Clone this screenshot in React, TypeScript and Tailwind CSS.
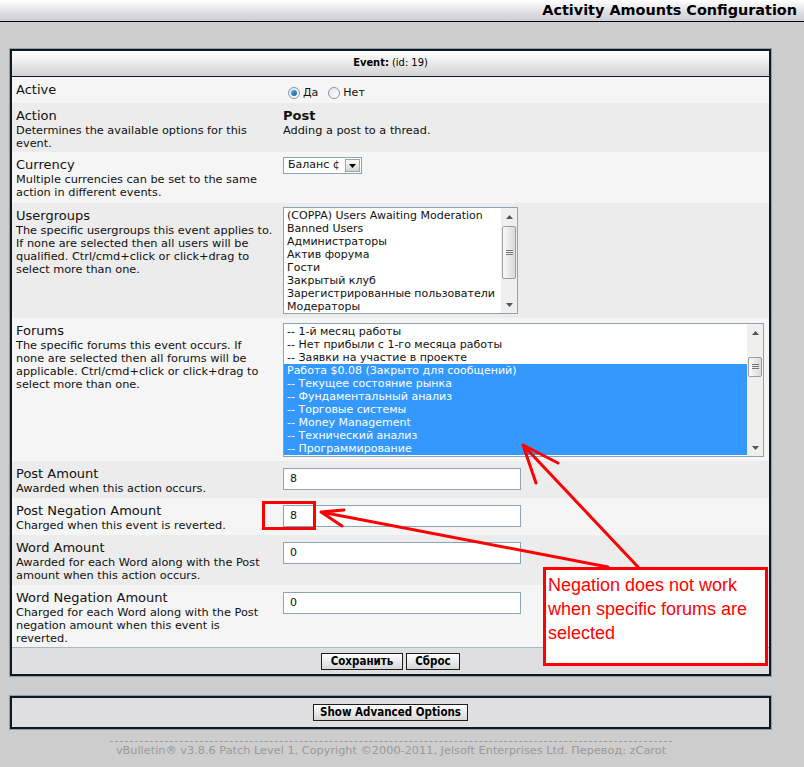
import React from "react";

type RowProps = {
  bg: string;
  h: string;
  label: string;
  lines?: string[];
  right: string;
  children?: React.ReactNode;
};

const Row = ({ bg, h, label, lines, right, children }: RowProps) => (
  <div className={`flex ${bg} ${h}`}>
    <div className="w-[267px] shrink-0 pl-[4px] pt-[5px] text-[#111]">
      <div className="text-[13px] leading-[16px] whitespace-nowrap">{label}</div>
      {lines?.map((line) => (
        <div key={line} className="whitespace-nowrap text-[11.3px] leading-[13px]">
          {line}
        </div>
      ))}
    </div>
    <div className={`flex-1 pl-[4px] ${right}`}>{children}</div>
  </div>
);

const Scrollbar = ({ thumb }: { thumb: string }) => (
  <div className="flex w-[16px] shrink-0 flex-col bg-[#efefed]">
    <div className="flex h-[17px] items-center justify-center">
      <svg width="7" height="4" viewBox="0 0 7 4">
        <path d="M3.5 0L7 4H0Z" fill="#555" />
      </svg>
    </div>
    <div className="flex-1">
      <div
        className={`${thumb} mx-[1px] flex items-center justify-center rounded-[2px] border border-[#9c9c9c] bg-gradient-to-r from-[#fbfbfb] to-[#d9d9d9]`}
      >
        <svg width="7" height="6" viewBox="0 0 7 6">
          <path d="M0 0.5H7M0 2.5H7M0 4.5H7" stroke="#777" strokeWidth="1" />
        </svg>
      </div>
    </div>
    <div className="flex h-[17px] items-center justify-center">
      <svg width="7" height="4" viewBox="0 0 7 4">
        <path d="M0 0H7L3.5 4Z" fill="#555" />
      </svg>
    </div>
  </div>
);

type ListProps = {
  size: string;
  items: string[];
  selectedFrom?: number;
  offset: string;
  thumb: string;
};

const ListBox = ({ size, items, selectedFrom = 999, offset, thumb }: ListProps) => (
  <div className={`flex overflow-hidden border border-[#8aa4b8] bg-white ${size}`}>
    <div className="flex-1 overflow-hidden">
      <div className={offset}>
        {items.map((item, i) => (
          <div
            key={item}
            className={`h-[13px] whitespace-nowrap pl-[3px] text-[11px] leading-[13px] ${
              i >= selectedFrom ? "bg-[#3399ff] text-white" : "text-[#111]"
            }`}
          >
            {item}
          </div>
        ))}
      </div>
    </div>
    <Scrollbar thumb={thumb} />
  </div>
);

const TextInput = ({ value }: { value: string }) => (
  <input
    readOnly
    value={value}
    className="h-[22px] w-[238px] border border-[#8aa4b8] bg-white pl-[6px] text-[11px] text-[#111] outline-none"
  />
);

const Radio = ({ checked }: { checked?: boolean }) => (
  <span className="flex h-[12px] w-[12px] items-center justify-center rounded-full border border-[#8696a4] bg-gradient-to-br from-[#e6e6e6] to-white">
    {checked && <span className="h-[6px] w-[6px] rounded-full bg-gradient-to-br from-[#5ab0ee] to-[#1258a8]" />}
  </span>
);

const Button = ({ label, w }: { label: string; w: string }) => (
  <button
    className={`flex h-[17px] items-center justify-center border border-[#1e1e1e] bg-gradient-to-b from-white to-[#d6d6d6] font-['DejaVu_Sans_Condensed','DejaVu_Sans',sans-serif] text-[11.5px] font-bold text-black ${w}`}
  >
    {label}
  </button>
);

const usergroups = [
  "(COPPA) Users Awaiting Moderation",
  "Banned Users",
  "Администраторы",
  "Актив форума",
  "Гости",
  "Закрытый клуб",
  "Зарегистрированные пользователи",
  "Модераторы",
];

const forums = [
  "-- 1-й месяц работы",
  "-- Нет прибыли с 1-го месяца работы",
  "-- Заявки на участие в проекте",
  "Работа $0.08 (Закрыто для сообщений)",
  "-- Текущее состояние рынка",
  "-- Фундаментальный анализ",
  "-- Торговые системы",
  "-- Money Management",
  "-- Технический анализ",
  "-- Программирование",
];

export default function App() {
  return (
    <div className="relative min-h-[767px] w-[804px] bg-[#cdcdcd] font-['DejaVu_Sans',Verdana,sans-serif] text-[#111]">
      {/* page title */}
      <div className="flex h-[22px] items-center justify-end border-b border-black bg-[linear-gradient(to_bottom,#ffffff_0%,#f3f3f5_22%,#dedee2_60%,#cfcfd3_100%)] pr-[7px]">
        <span className="text-[14.4px] font-bold text-black">Activity Amounts Configuration</span>
      </div>

      {/* main form */}
      <div className="ml-[9px] mt-[26px] w-[763px] border border-[#8f9fa8]">
        <div className="border-2 border-[#0e1a22]">
          <div className="flex h-[26px] items-center justify-center border-b border-[#0e1a22] bg-[linear-gradient(to_bottom,#ffffff_0%,#f6f6f6_25%,#e2e2e2_65%,#d2d2d4_100%)] font-['DejaVu_Sans_Condensed','DejaVu_Sans',sans-serif] text-[11px] text-black">
            <b>Event:</b>&nbsp;(id: 19)
          </div>

          <Row bg="bg-[#f5f5f5]" h="h-[26px]" label="Active" right="pt-[9px]">
            <div className="flex h-[14px] items-center text-[11px]">
              <span className="ml-[5px]">
                <Radio checked />
              </span>
              <span className="ml-[3px]">Да</span>
              <span className="ml-[10px]">
                <Radio />
              </span>
              <span className="ml-[3px]">Нет</span>
            </div>
          </Row>

          <Row
            bg="bg-[#ececec]"
            h="h-[49px]"
            label="Action"
            lines={["Determines the available options for this", "event."]}
            right="pt-[5px]"
          >
            <div className="text-[13px] font-bold leading-[16px]">Post</div>
            <div className="text-[11.3px] leading-[13px]">Adding a post to a thread.</div>
          </Row>

          <Row
            bg="bg-[#f5f5f5]"
            h="h-[51px]"
            label="Currency"
            lines={["Multiple currencies can be set to the same", "action in different events."]}
            right="pt-[5px]"
          >
            <div className="flex h-[17px] w-[79px] items-center justify-between border border-[#8aa4b8] bg-white pl-[4px] pr-[1px] text-[11px]">
              <span>Баланс ¢</span>
              <span className="flex h-[13px] w-[15px] items-center justify-center border border-[#a3a3a3] bg-gradient-to-b from-white to-[#d4d4d4]">
                <svg width="7" height="4" viewBox="0 0 7 4">
                  <path d="M0 0H7L3.5 4Z" fill="#000" />
                </svg>
              </span>
            </div>
          </Row>

          <Row
            bg="bg-[#ececec]"
            h="h-[115px]"
            label="Usergroups"
            lines={[
              "The specific usergroups this event applies to.",
              "If none are selected then all users will be",
              "qualified. Ctrl/cmd+click or click+drag to",
              "select more than one.",
            ]}
            right="pt-[4px]"
          >
            <ListBox size="h-[107px] w-[235px]" items={usergroups} offset="pt-[1px]" thumb="mt-[1px] h-[53px]" />
          </Row>

          <Row
            bg="bg-[#f5f5f5]"
            h="h-[143px]"
            label="Forums"
            lines={[
              "The specific forums this event occurs. If",
              "none are selected then all forums will be",
              "applicable. Ctrl/cmd+click or click+drag to",
              "select more than one.",
            ]}
            right="pt-[5px]"
          >
            <ListBox
              size="h-[134px] w-[481px]"
              items={forums}
              selectedFrom={3}
              offset="pt-[1px]"
              thumb="mt-[16px] h-[20px]"
            />
          </Row>

          <Row bg="bg-[#ececec]" h="h-[37px]" label="Post Amount" lines={["Awarded when this action occurs."]} right="pt-[4px]">
            <TextInput value="8" />
          </Row>

          <Row
            bg="bg-[#f5f5f5]"
            h="h-[37px]"
            label="Post Negation Amount"
            lines={["Charged when this event is reverted."]}
            right="pt-[4px]"
          >
            <TextInput value="8" />
          </Row>

          <Row
            bg="bg-[#ececec]"
            h="h-[50px]"
            label="Word Amount"
            lines={["Awarded for each Word along with the Post", "amount when this action occurs."]}
            right="pt-[4px]"
          >
            <TextInput value="0" />
          </Row>

          <Row
            bg="bg-[#f5f5f5]"
            h="h-[62px]"
            label="Word Negation Amount"
            lines={["Charged for each Word along with the Post", "negation amount when this event is", "reverted."]}
            right="pt-[4px]"
          >
            <TextInput value="0" />
          </Row>

          <div className="flex h-[27px] justify-center gap-[3px] border-t border-[#a9b7bf] bg-[#dfdfe1] pt-[5px]">
            <Button label="Сохранить" w="w-[82px]" />
            <Button label="Сброс" w="w-[54px]" />
          </div>
        </div>
      </div>

      {/* advanced options */}
      <div className="ml-[9px] mt-[18px] w-[763px] border border-[#8f9fa8]">
        <div className="flex h-[33px] items-center justify-center border-2 border-[#0e1a22] bg-[#dfdfe1]">
          <Button label="Show Advanced Options" w="w-[155px]" />
        </div>
      </div>

      {/* copyright */}
      <div className="ml-[110px] mt-[11px] w-[562px] border-t border-dashed border-[#9a9a9a] pt-[2px] text-center text-[11.3px] leading-[14px] whitespace-nowrap text-[#999]">
        vBulletin® v3.8.6 Patch Level 1, Copyright ©2000-2011, Jelsoft Enterprises Ltd. Перевод: zCarot
      </div>

      {/* annotation overlays */}
      <div className="absolute left-[262px] top-[501px] h-[29px] w-[54px] border-[3px] border-[#ff0000]" />
      <div className="absolute left-[543px] top-[567px] h-[99px] w-[225px] border-[3px] border-[#ff0000] bg-white pl-[2px] pt-[3px] font-['Liberation_Sans',Arial,sans-serif] text-[18px] leading-[24px] text-[#ff0000]">
        <div>Negation does not work</div>
        <div>when specific forums are</div>
        <div>selected</div>
      </div>
      <svg className="pointer-events-none absolute left-0 top-0" width="804" height="767" viewBox="0 0 804 767">
        <g stroke="#ff0000" strokeWidth="3" strokeLinecap="round" fill="none">
          <path d="M638 567L523 445M523 445L558 463M523 445L536 483" />
          <path d="M608 567L321 512M321 512L344 510M321 512L342 526" />
        </g>
      </svg>
    </div>
  );
}
